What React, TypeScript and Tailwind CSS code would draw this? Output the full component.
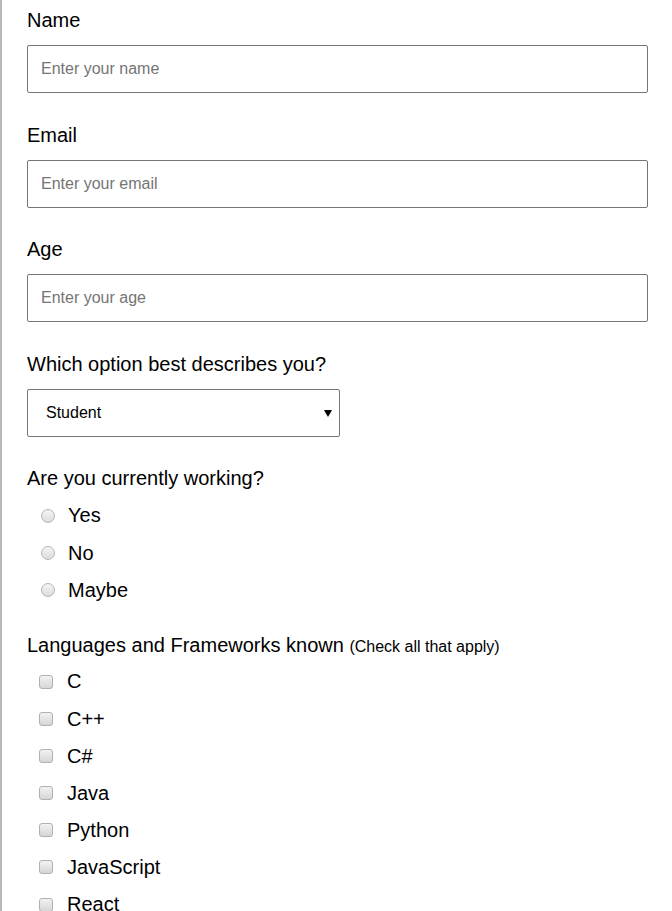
import { useState } from 'react'

// Simple survey form: text inputs, select, radio group, checkbox list

const langs = ['C', 'C++', 'C#', 'Java', 'Python', 'JavaScript', 'React']
const workOptions = ['Yes', 'No', 'Maybe']

function Radio({ label }: { label: string }) {
  return (
    <label className="flex h-[23px] items-center">
      <span className="ml-[14px] h-[14px] w-[14px] shrink-0 rounded-full border border-[#b4b4b4] bg-gradient-to-b from-[#f4f4f4] to-[#dcdcdc]" />
      <span className="ml-[13px]">{label}</span>
    </label>
  )
}

function Checkbox({ label }: { label: string }) {
  return (
    <label className="flex h-[23px] items-center">
      <span className="ml-[12px] h-[14px] w-[14px] shrink-0 rounded-[3px] border border-[#b0b0b0] bg-gradient-to-b from-[#f2f2f2] to-[#d6d6d6]" />
      <span className="ml-[14px]">{label}</span>
    </label>
  )
}

export default function App() {
  const [role, setRole] = useState('student')

  return (
    <div
      className="min-h-[911px] border-l-2 border-[#b8b8b8] bg-white pl-[25px] pt-[9px] text-[20px] leading-[23px] text-black"
      style={{ fontFamily: '"Liberation Sans", Arial, sans-serif' }}
    >
      <div className="flex flex-col gap-[30.5px]">
        {/* Text fields */}
        {[
          ['Name', 'Enter your name'],
          ['Email', 'Enter your email'],
          ['Age', 'Enter your age'],
        ].map(([label, ph]) => (
          <div key={label} className="flex flex-col">
            <label className="block">{label}</label>
            <input
              placeholder={ph}
              className="mt-[13px] h-[48px] w-[621px] rounded-[2px] border border-[#767676] px-[13px] text-[16px] placeholder:text-[#757575] focus:outline-none"
            />
          </div>
        ))}

        {/* Select */}
        <div className="flex flex-col">
          <label className="block">Which option best describes you?</label>
          <div className="relative mt-[13px] w-[313px]">
            <select
              value={role}
              onChange={(e) => setRole(e.target.value)}
              className="h-[48px] w-full appearance-none rounded-[2px] border border-[#767676] bg-white pl-[18px] text-[16px] text-black focus:outline-none"
            >
              <option value="student">Student</option>
              <option value="full-time">Full Time Job</option>
              <option value="other">Other</option>
            </select>
            <span className="pointer-events-none absolute right-[8px] top-[21px] h-0 w-0 border-x-[4px] border-t-[7px] border-x-transparent border-t-black" />
          </div>
        </div>

        {/* Radio group */}
        <div className="flex flex-col gap-[14.3px]">
          <p>Are you currently working?</p>
          {workOptions.map((o) => (
            <Radio key={o} label={o} />
          ))}
        </div>

        {/* Checkbox list */}
        <div className="mt-[1.5px] flex flex-col gap-[14.1px]">
          <p className="-mb-[1.5px]">
            Languages and Frameworks known <span className="text-[16px]">(Check all that apply)</span>
          </p>
          {langs.map((l) => (
            <Checkbox key={l} label={l} />
          ))}
        </div>
      </div>
    </div>
  )
}
